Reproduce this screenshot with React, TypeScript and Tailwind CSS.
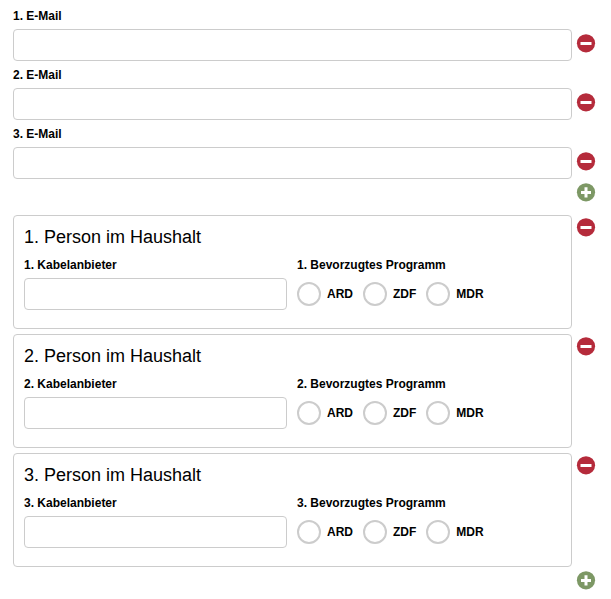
const numbers = [1, 2, 3];
const programs = ["ARD", "ZDF", "MDR"];

function RoundButton({ kind, label }: { kind: "add" | "remove"; label: string }) {
  return (
    <button
      type="button"
      aria-label={label}
      className={`block size-[18px] shrink-0 rounded-full ${kind === "add" ? "text-[#7d9865]" : "text-[#b52b3b]"}`}
    >
      <svg viewBox="0 0 18 18" className="block size-full overflow-visible" aria-hidden="true">
        <circle cx="9" cy="9.3" r="9.1" fill="currentColor" />
        {kind === "add" ? (
          <path d="M4 8h3.5V4.3h3V8H14v3h-3.5v3.5h-3V11H4z" fill="#fff" />
        ) : (
          <path d="M3.5 8h11v3h-11z" fill="#fff" />
        )}
      </svg>
    </button>
  );
}

const inputStyle = "block h-8 w-full rounded border border-[#ccc] bg-white px-2 text-xs outline-none";

function EmailRow({ n }: { n: number }) {
  return (
    <div className="flex items-end gap-[5px]">
      <div className="min-w-0 flex-1">
        <label htmlFor={`email-${n}`} className="mb-[5px] block text-xs font-bold">
          {n}. E-Mail
        </label>
        <input id={`email-${n}`} type="email" className={inputStyle} />
      </div>
      <div className="pb-[9px]">
        <RoundButton kind="remove" label={`${n}. E-Mail entfernen`} />
      </div>
    </div>
  );
}

function PersonCard({ n }: { n: number }) {
  return (
    <div className="flex items-start gap-[5px]">
      <section className="min-w-0 flex-1 rounded border border-[#ccc] pt-[9px] pr-[11px] pb-[18px] pl-2.5">
        <h2 className="text-lg leading-6">{n}. Person im Haushalt</h2>
        <div className="mt-2 grid grid-cols-2 gap-2.5">
          <div>
            <label htmlFor={`provider-${n}`} className="mb-[5px] block text-xs font-bold">
              {n}. Kabelanbieter
            </label>
            <input id={`provider-${n}`} type="text" className={inputStyle} />
          </div>
          <fieldset>
            <legend className="mb-[5px] block text-xs font-bold">{n}. Bevorzugtes Programm</legend>
            <div className="flex h-8 items-center gap-2.5">
              {programs.map((program) => (
                <label key={program} className="flex items-center gap-[6px] text-xs font-bold">
                  <input
                    type="radio"
                    name={`program-${n}`}
                    value={program}
                    className="size-6 appearance-none rounded-full border-2 border-[#ccc] bg-white checked:bg-[#ccc]"
                  />
                  {program}
                </label>
              ))}
            </div>
          </fieldset>
        </div>
      </section>
      <div className="pt-[3px]">
        <RoundButton kind="remove" label={`${n}. Person entfernen`} />
      </div>
    </div>
  );
}

export default function App() {
  return (
    <form className="bg-white pt-2 pr-4 pb-2 pl-[13px] font-['Liberation_Sans',Arial,sans-serif] text-black">
      <div className="flex flex-col gap-[6px]">
        {numbers.map((n) => (
          <EmailRow key={n} n={n} />
        ))}
      </div>
      <div className="mt-1 flex justify-end">
        <RoundButton kind="add" label="E-Mail hinzufügen" />
      </div>
      <div className="mt-[14px] flex flex-col gap-[5px]">
        {numbers.map((n) => (
          <PersonCard key={n} n={n} />
        ))}
      </div>
      <div className="mt-1 flex justify-end">
        <RoundButton kind="add" label="Person hinzufügen" />
      </div>
    </form>
  );
}
